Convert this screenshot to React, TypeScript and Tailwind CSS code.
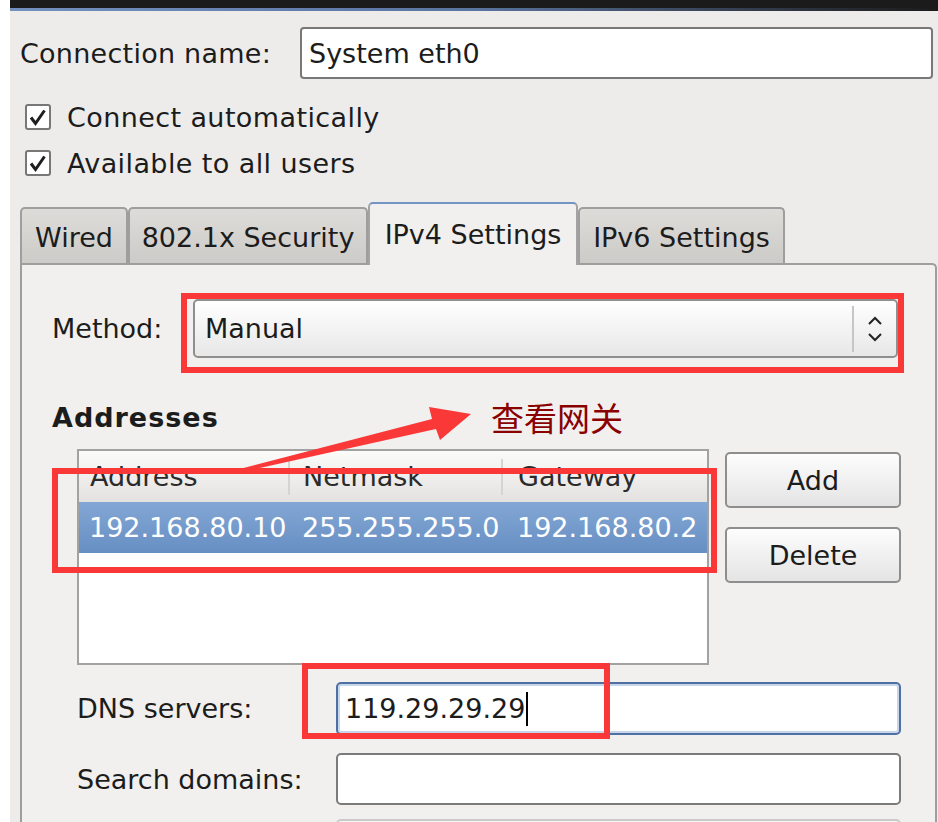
import React from "react";

const CheckBox = () => (
  <svg width="26" height="26" viewBox="0 0 26 26" className="shrink-0">
    <rect x="1" y="1" width="24" height="24" rx="2" fill="#fff" stroke="#777" strokeWidth="2" />
    <path d="M6 13.5 L10.5 19.5 L19.5 6.5" fill="none" stroke="#1e1e1e" strokeWidth="3" />
  </svg>
);

const UpDown = () => (
  <svg width="18" height="28" viewBox="0 0 18 28">
    <path d="M3 9 L9 3 L15 9" fill="none" stroke="#222" strokeWidth="2" />
    <path d="M3 19 L9 25 L15 19" fill="none" stroke="#222" strokeWidth="2" />
  </svg>
);

const Tab = ({ label, width, active }: { label: string; width: string; active?: boolean }) =>
  active ? (
    <div
      className={`${width} h-[63px] -mb-[2px] relative z-10 flex items-center justify-center rounded-t-[5px] border-2 border-b-0 border-[#a3a3a3] border-t-[#7293c3] bg-[#f1f0ee]`}
    >
      {label}
    </div>
  ) : (
    <div
      className={`${width} h-[56px] flex items-center justify-center pt-[3px] rounded-t-[5px] border-2 border-b-0 border-[#9e9e9e] bg-linear-to-b from-[#dedcd9] to-[#cdcbc8]`}
    >
      {label}
    </div>
  );

const Button = ({ label }: { label: string }) => (
  <div className="h-[56px] flex items-center justify-center rounded-[5px] border-2 border-[#8e8e8e] bg-linear-to-b from-[#fdfdfd] to-[#e4e4e4]">
    {label}
  </div>
);

export default function App() {
  return (
    <div className="relative w-[938px] h-[822px] overflow-hidden flex bg-[#edeceb] text-[27px] leading-none text-[#1c1c1c] font-['DejaVu_Sans','Liberation_Sans',sans-serif]">
      <div className="w-[10px] shrink-0 bg-white" />

      <div className="flex-1 flex flex-col">
        {/* window title bar (cut off) */}
        <div className="h-[11px] shrink-0 bg-[#1b1b1b] pt-[8px]">
          <div className="h-[3px] bg-linear-to-r from-[#7390bd] via-[#5a74a0] to-[#1b1b1b]" />
        </div>

        <div className="pl-[10px] flex flex-col flex-1">
          <div className="mt-[16px] flex items-center h-[52px]">
            <span className="w-[280px] tracking-[0.25px]">Connection name:</span>
            <div className="w-[633px] h-[52px] flex items-center pl-[7px] rounded-[4px] border-2 border-[#787878] bg-white">
              System eth0
            </div>
          </div>

          <div className="mt-[21px] h-[34px] flex items-center gap-[16px] pl-[5px]">
            <CheckBox />
            <span className="tracking-[0.4px]">Connect automatically</span>
          </div>
          <div className="mt-[12px] h-[34px] flex items-center gap-[16px] pl-[5px]">
            <CheckBox />
            <span className="tracking-[0.4px]">Available to all users</span>
          </div>

          {/* notebook tabs */}
          <div className="mt-[22px] h-[61px] flex items-end">
            <Tab label="Wired" width="w-[108px]" />
            <Tab label="802.1x Security" width="w-[240px]" />
            <Tab label="IPv4 Settings" width="w-[210px]" active />
            <Tab label="IPv6 Settings" width="w-[207px]" />
          </div>

          <div className="w-[917px] flex-1 flex flex-col pt-[34px] pl-[30px] rounded-tr-[5px] border-2 border-b-0 border-[#9e9e9e] bg-[#f1f0ee]">
            <div className="flex items-center h-[59px]">
              <span className="w-[141px]">Method:</span>
              <div className="w-[705px] h-[59px] flex items-center pl-[10px] rounded-[5px] border-2 border-[#8f8f8f] bg-linear-to-b from-white to-[#e7e7e7]">
                <span>Manual</span>
                <div className="ml-auto flex items-center">
                  <div className="w-[2px] h-[46px] bg-[#c6c6c6]" />
                  <div className="w-[42px] flex justify-center">
                    <UpDown />
                  </div>
                </div>
              </div>
            </div>

            <div className="mt-[39px] h-[40px] flex items-center">
              <span className="w-[439px] font-bold tracking-[1px]">Addresses</span>
              <span className="text-[33px] text-[#8a0000] font-['Noto_Sans_CJK_SC',sans-serif]">查看网关</span>
            </div>

            <div className="mt-[12px] pl-[25px] flex gap-[16px]">
              <div className="w-[632px] h-[216px] flex flex-col border-2 border-[#a2a2a2] bg-white">
                <div className="h-[51px] grid grid-cols-[209px_2px_211px_2px_1fr] items-center text-[#2b2b2b] bg-linear-to-b from-[#fbfbfa] to-[#e3e2e0]">
                  <span className="pl-[11px]">Address</span>
                  <div className="h-[36px] bg-[#d4d4d4]" />
                  <span className="pl-[13px]">Netmask</span>
                  <div className="h-[36px] bg-[#d4d4d4]" />
                  <span className="pl-[15px]">Gateway</span>
                </div>
                <div className="h-[51px] grid grid-cols-[211px_213px_1fr] items-center text-white bg-linear-to-b from-[#83a7d5] to-[#678fc3]">
                  <span className="pl-[10px]">192.168.80.10</span>
                  <span className="pl-[12px]">255.255.255.0</span>
                  <span className="pl-[14px]">192.168.80.2</span>
                </div>
              </div>

              <div className="w-[176px] flex flex-col gap-[19px] pt-[3px]">
                <Button label="Add" />
                <Button label="Delete" />
              </div>
            </div>

            <div className="mt-[17px] pl-[25px] flex items-center h-[53px]">
              <span className="w-[259px]">DNS servers:</span>
              <div className="w-[565px] h-[53px] flex items-center pl-[7px] rounded-[5px] border-2 border-[#4e70a3] bg-white shadow-[inset_0_0_0_2px_#c7d6ea]">
                <span>119.29.29.29</span>
                <span className="w-[2px] h-[34px] bg-black ml-[1px]" />
              </div>
            </div>

            <div className="mt-[18px] pl-[25px] flex items-center h-[52px]">
              <span className="w-[259px]">Search domains:</span>
              <div className="w-[565px] h-[52px] rounded-[5px] border-2 border-[#7b7b7b] bg-white" />
            </div>

            <div className="mt-[14px] pl-[284px] h-[50px]">
              <div className="w-[565px] h-[50px] rounded-[5px] border-2 border-[#c9c9c9] bg-[#f6f6f6]" />
            </div>
          </div>
        </div>
      </div>

      {/* red annotations */}
      <div className="absolute left-[181px] top-[293px] w-[723px] h-[80px] border-[6px] border-[#fb3838]" />
      <div className="absolute left-[52px] top-[468px] w-[665px] h-[105px] border-[6px] border-[#fb3838]" />
      <div className="absolute left-[302px] top-[663px] w-[308px] h-[76px] border-[6px] border-[#fb3838]" />
      <svg className="absolute left-0 top-0 pointer-events-none" width="938" height="822" viewBox="0 0 938 822">
        <polygon
          points="236,470 432,419 429,407 471,414 440,440 436,429 242,472"
          fill="#fb3838"
        />
      </svg>
    </div>
  );
}
